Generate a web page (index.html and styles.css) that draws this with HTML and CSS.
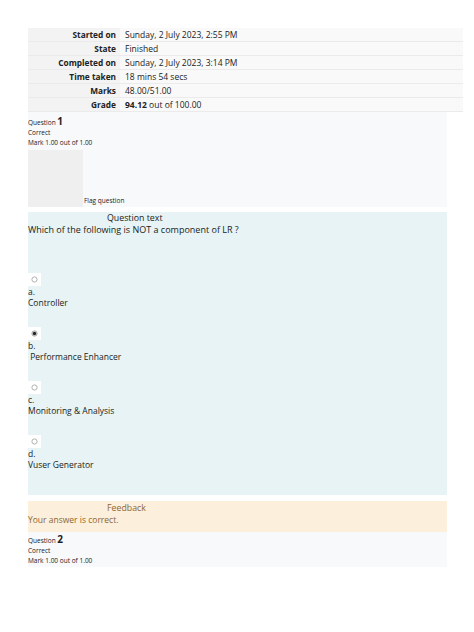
FILE: index.html
```html
<!DOCTYPE html>
<html lang="en">
<head>
    <meta charset="UTF-8">
    <meta name="viewport" content="width=device-width, initial-scale=1.0">
    <title>Quiz review</title>
    <link rel="stylesheet" href="styles.css">
</head>
<body>
    <!-- attempt summary -->
    <table class="summary">
        <tr><th>Started on</th><td>Sunday, 2 July 2023, 2:55 PM</td></tr>
        <tr><th>State</th><td>Finished</td></tr>
        <tr><th>Completed on</th><td>Sunday, 2 July 2023, 3:14 PM</td></tr>
        <tr><th>Time taken</th><td>18 mins 54 secs</td></tr>
        <tr><th>Marks</th><td>48.00/51.00</td></tr>
        <tr><th>Grade</th><td><b>94.12</b> out of 100.00</td></tr>
    </table>

    <!-- question 1 -->
    <div class="info">
        <div class="qno">Question <span>1</span></div>
        <div class="meta">Correct</div>
        <div class="meta">Mark 1.00 out of 1.00</div>
        <div class="flag-row">
            <div class="flag-box"></div>
            <div class="flag-text">Flag question</div>
        </div>
    </div>

    <div class="formulation">
        <h4>Question text</h4>
        <div class="qtext">Which of the following is NOT a component of LR ?</div>
        <div class="answers">
            <div class="option">
                <span class="radio"><svg width="7" height="7" viewBox="0 0 7 7"><circle cx="3.5" cy="3.5" r="2.6" fill="#fff" stroke="#a0a0a0" stroke-width="0.8"/></svg></span>
                <div class="letter">a.</div>
                <div class="label">Controller</div>
            </div>
            <div class="option">
                <span class="radio"><svg width="7" height="7" viewBox="0 0 7 7"><circle cx="3.5" cy="3.5" r="2.6" fill="#fff" stroke="#888" stroke-width="0.8"/><circle cx="3.5" cy="3.5" r="1.7" fill="#222"/></svg></span>
                <div class="letter">b.</div>
                <div class="label">&nbsp;Performance Enhancer</div>
            </div>
            <div class="option">
                <span class="radio"><svg width="7" height="7" viewBox="0 0 7 7"><circle cx="3.5" cy="3.5" r="2.6" fill="#fff" stroke="#a0a0a0" stroke-width="0.8"/></svg></span>
                <div class="letter">c.</div>
                <div class="label">Monitoring &amp; Analysis</div>
            </div>
            <div class="option">
                <span class="radio"><svg width="7" height="7" viewBox="0 0 7 7"><circle cx="3.5" cy="3.5" r="2.6" fill="#fff" stroke="#a0a0a0" stroke-width="0.8"/></svg></span>
                <div class="letter">d.</div>
                <div class="label">Vuser Generator</div>
            </div>
        </div>
    </div>

    <div class="feedback">
        <h4>Feedback</h4>
        <div class="fb-text">Your answer is correct.</div>
    </div>

    <!-- question 2 -->
    <div class="info info-short">
        <div class="qno">Question <span>2</span></div>
        <div class="meta">Correct</div>
        <div class="meta">Mark 1.00 out of 1.00</div>
    </div>
</body>
</html>
```

FILE: styles.css
```css
body {
    margin: 0;
    padding: 28px 0 0 28px;
    font-family: "Open Sans", "Noto Sans", sans-serif;
    color: #1d2125;
    background-color: #fff;
}
.summary {
    width: 435px;
    border-collapse: collapse;
    font-size: 8.5px;
    color: #222;
}
.summary th,
.summary td {
    height: 13px;
    padding: 0;
    border-bottom: 1px solid #ebebeb;
    line-height: 13px;
    white-space: nowrap;
}
.summary th {
    width: 88px;
    padding-right: 4px;
    text-align: right;
    background-color: #f3f3f3;
    font-size: 8.3px;
    font-weight: bold;
}
.summary td {
    padding-left: 5px;
    background-color: #f9f9f9;
}
.info {
    width: 419px;
    background-color: #f8f9fa;
    padding-top: 4px;
    font-size: 6.5px;
}
.info-short {
    padding-top: 2px;
    padding-bottom: 1px;
}
.qno {
    line-height: 10px;
}
.qno span {
    font-size: 10px;
    font-weight: bold;
}
.meta {
    line-height: 10px;
}
.flag-row {
    display: flex;
    align-items: flex-end;
    margin-top: 2px;
}
.flag-box {
    width: 55px;
    height: 57px;
    background-color: #efefef;
}
.flag-text {
    padding-left: 1px;
    line-height: 10px;
    margin-bottom: 1px;
}
.formulation {
    width: 419px;
    margin-top: 5px;
    padding-bottom: 24px;
    background-color: #e7f3f5;
    font-size: 8.5px;
    color: #1a1d20;
}
h4 {
    margin: 0;
    padding-left: 79px;
    font-size: 8.8px;
    font-weight: normal;
    line-height: 12px;
}
.qtext {
    font-size: 9px;
    line-height: 12px;
}
.answers {
    padding-top: 37px;
}
.option {
    margin-bottom: 18px;
}
.option:last-child {
    margin-bottom: 0;
}
.radio {
    display: flex;
    align-items: center;
    justify-content: center;
    width: 13px;
    height: 13px;
    background-color: #fff;
}
.letter {
    line-height: 11px;
}
.label {
    line-height: 12px;
}
.feedback {
    width: 419px;
    margin-top: 6px;
    padding-bottom: 6px;
    background-color: #fcefdc;
    color: #8e662e;
    font-size: 8.5px;
}
.feedback h4 {
    padding-top: 1px;
}
.fb-text {
    line-height: 12px;
}
```
